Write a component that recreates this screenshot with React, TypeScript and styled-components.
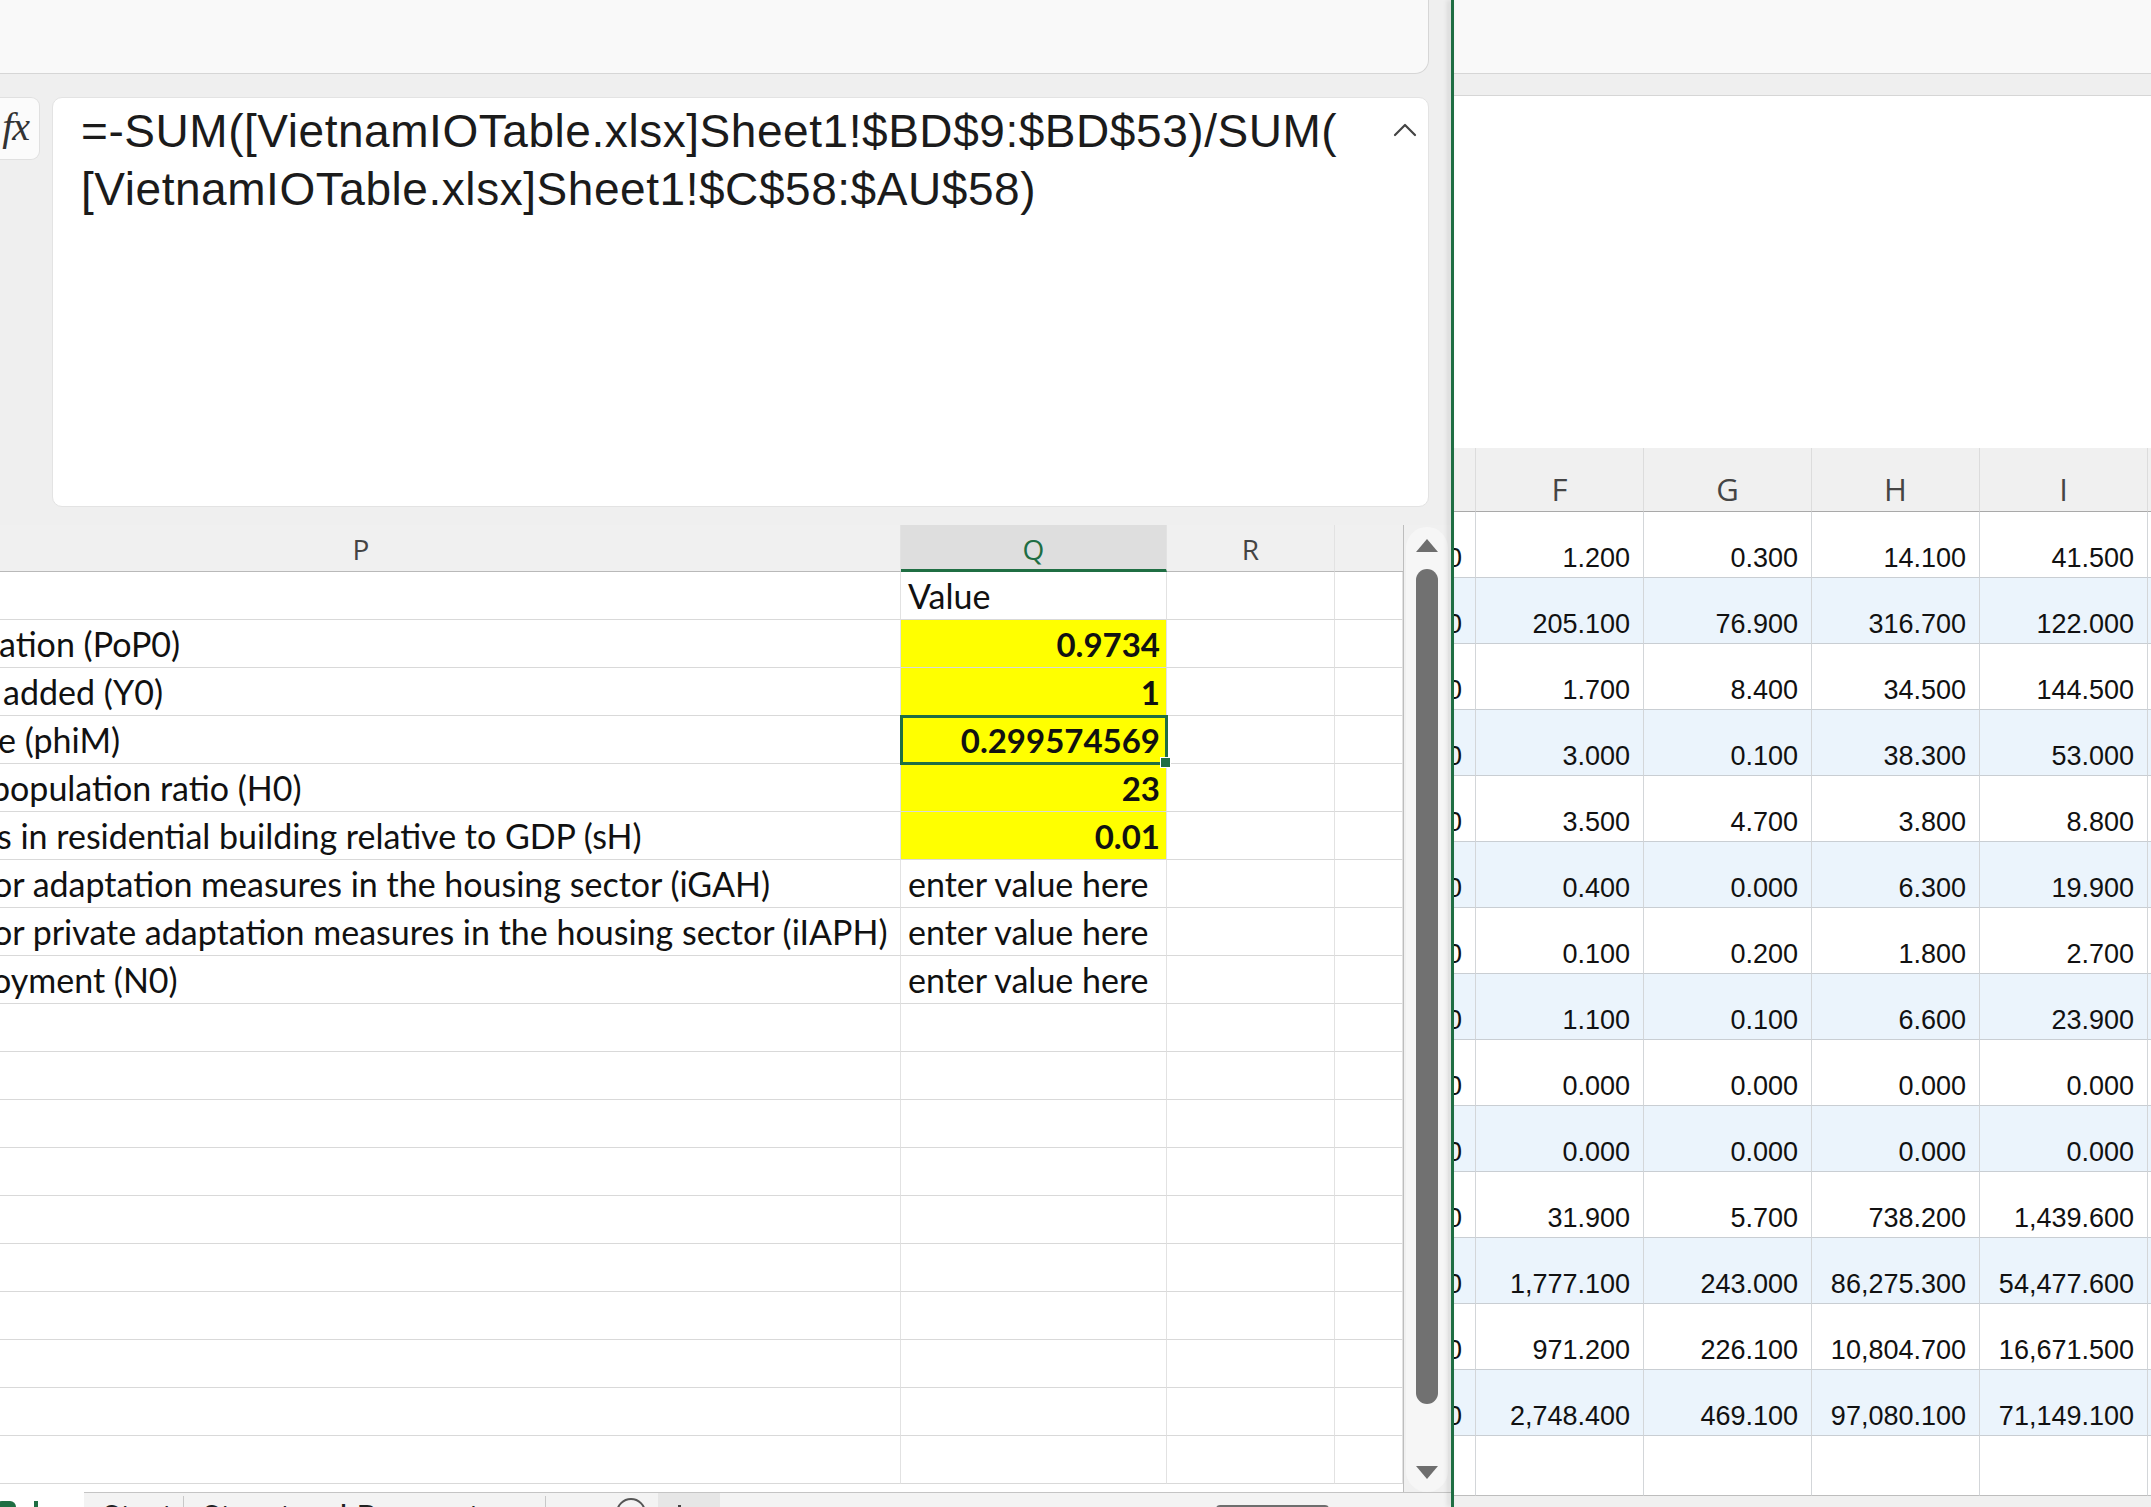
import styled, { createGlobalStyle, css } from "styled-components";

const GlobalStyle = createGlobalStyle`
  html, body {
    margin: 0;
    padding: 0;
    background: #efefef;
  }
  body {
    font-family: "Liberation Sans", Arial, sans-serif;
  }
  * {
    box-sizing: border-box;
  }
`;

const CELL_FONT = `Lato, "Open Sans", sans-serif`;
const HEAD_FONT = `"Open Sans", "Noto Sans", sans-serif`;

const Screen = styled.div`
  width: 2151px;
  height: 1507px;
  overflow: hidden;
  display: flex;
  background: #efefef;
`;

const LeftWindow = styled.div`
  width: 1451px;
  flex: none;
  display: flex;
  flex-direction: column;
  overflow: hidden;
`;

const Divider = styled.div`
  width: 3px;
  flex: none;
  background: #1f6e43;
  box-shadow: -3px 0 5px rgba(0, 0, 0, 0.15);
  z-index: 1;
`;

const RightWindow = styled.div`
  flex: 1;
  min-width: 0;
  display: flex;
  flex-direction: column;
  overflow: hidden;
`;

const RibbonStub = styled.div<{ $rounded?: boolean }>`
  height: 74px;
  flex: none;
  background: #f9f9f9;
  border-bottom: 1px solid #d6d6d6;
  ${(p) =>
    p.$rounded &&
    css`
      margin-right: 22px;
      border-right: 1px solid #d6d6d6;
      border-bottom-right-radius: 14px;
    `}
`;

/* formula bar */

const FormulaRow = styled.div`
  display: flex;
  gap: 12px;
  margin: 23px 22px 0 0;
  height: 410px;
  flex: none;
`;

const FxBox = styled.div`
  width: 40px;
  height: 63px;
  flex: none;
  background: #fbfbfb;
  border: 1px solid #e0e0e0;
  border-left: none;
  border-radius: 0 9px 9px 0;
  display: flex;
  align-items: center;
  justify-content: flex-end;
  padding: 0 10px 4px 0;
  font: italic 40px "Liberation Serif", serif;
  color: #333;
  letter-spacing: -1px;
`;

const FormulaBox = styled.div`
  flex: 1;
  display: flex;
  background: #fff;
  border: 1px solid #e3e3e3;
  border-radius: 10px;
  padding: 4px 10px 0 28px;
`;

const FormulaText = styled.div`
  flex: 1;
  font: 46px/58px "Liberation Sans", Arial, sans-serif;
  color: #1b1b1b;
  letter-spacing: 0.55px;
  white-space: nowrap;
`;

const CollapseButton = styled.div`
  width: 26px;
  height: 20px;
  margin-top: 18px;
  flex: none;
  color: #444;
`;

/* left sheet */

const SheetArea = styled.div`
  display: flex;
  margin-top: 18px;
  height: 967px;
  flex: none;
`;

const Grid = styled.div`
  width: 1404px;
  flex: none;
  background: #fff;
  border-right: 1px solid #bdbdbd;
  display: grid;
  grid-template-columns: 901px 266px 168px 1fr;
  grid-auto-rows: 48px;
  grid-template-rows: 47px;
  overflow: hidden;
`;

const HeadCell = styled.div<{ $active?: boolean; $last?: boolean; $offset?: number }>`
  background: ${(p) => (p.$active ? "#dedede" : "#f0f0f0")};
  border-bottom: ${(p) => (p.$active ? "3px solid #1f6e43" : "1px solid #b9b9b9")};
  border-right: ${(p) => (p.$last ? "none" : "1px solid #e2e2e2")};
  color: ${(p) => (p.$active ? "#1f6e43" : "#444")};
  font: 28px ${HEAD_FONT};
  display: flex;
  align-items: flex-end;
  justify-content: center;
  padding-bottom: ${(p) => (p.$active ? "2px" : "4px")};
  padding-right: ${(p) => p.$offset ?? 0}px;
  line-height: 36px;
`;

const Cell = styled.div<{ $yellow?: boolean; $align?: "left" | "right"; $bold?: boolean }>`
  position: relative;
  background: ${(p) => (p.$yellow ? "#ffff00" : "#fff")};
  border-bottom: 1px solid #d9d9d9;
  border-right: 1px solid #e2e2e2;
  font: ${(p) => (p.$bold ? "700 33px" : "400 34px")} / 40px ${CELL_FONT};
  color: #111;
  display: flex;
  align-items: flex-end;
  justify-content: ${(p) => (p.$align === "right" ? "flex-end" : "flex-start")};
  padding: 0 ${(p) => (p.$align === "right" ? "6px" : "0")} 3px
    ${(p) => (p.$align === "right" ? "0" : "7px")};
  white-space: nowrap;
  overflow: hidden;
`;

const LabelCell = styled(Cell)`
  padding-left: 0;
`;

const LabelText = styled.span<{ $shift: number }>`
  margin-left: ${(p) => p.$shift}px;
`;

const SelectedCell = styled(Cell)`
  overflow: visible;
  outline: 3px solid #1f6e43;
  outline-offset: -2px;
  z-index: 1;

  &::after {
    content: "";
    position: absolute;
    right: -5px;
    bottom: -5px;
    width: 9px;
    height: 9px;
    background: #1f6e43;
    border: 1px solid #fff;
  }
`;

const VScroll = styled.div`
  flex: 1;
  background: #f0f0f0;
  padding: 2px 3px 0 2px;
  display: flex;
`;

const Track = styled.div`
  flex: 1;
  background: #f6f6f6;
  border-radius: 22px;
  display: flex;
  flex-direction: column;
  align-items: center;
  padding-top: 12px;
`;

const Arrow = styled.div<{ $down?: boolean }>`
  width: 0;
  height: 0;
  border-left: 11px solid transparent;
  border-right: 11px solid transparent;
  ${(p) =>
    p.$down
      ? css`
          border-top: 13px solid #6e6e6e;
        `
      : css`
          border-bottom: 13px solid #6e6e6e;
        `}
`;

const Thumb = styled.div`
  width: 22px;
  height: 835px;
  margin: 17px 0 62px;
  background: #717171;
  border-radius: 11px;
`;

/* sheet tabs */

const TabBar = styled.div`
  height: 40px;
  flex: none;
  display: flex;
  background: #fff;
`;

const StatusIcon = styled.div`
  width: 84px;
  flex: none;
  padding: 9px 0 0 0;
  display: flex;
  gap: 6px;
`;

const StatusDot = styled.div`
  width: 20px;
  height: 20px;
  margin-left: -4px;
  border-radius: 6px;
  background: #1f6e43;
`;

const StatusMark = styled.div`
  width: 4px;
  height: 20px;
  margin-left: 12px;
  background: #1f6e43;
`;

const Tabs = styled.div`
  flex: 1;
  display: flex;
  align-items: flex-start;
  background: #f3f3f3;
  border-top: 1px solid #c4c4c4;
`;

const Tab = styled.div<{ $width: number }>`
  width: ${(p) => p.$width}px;
  flex: none;
  padding: 1px 0 0 18px;
  margin-top: 3px;
  border-right: 1px solid #c8c8c8;
  font: 34px/40px ${CELL_FONT};
  color: #222;
  white-space: nowrap;
`;

const AddSheet = styled.div`
  width: 30px;
  height: 30px;
  margin: 5px 12px 0 70px;
  border: 2px solid #555;
  border-radius: 50%;
  flex: none;
`;

const NavShade = styled.div`
  width: 62px;
  height: 30px;
  background: #e6e6e6;
  flex: none;
  display: flex;
  gap: 48px;
  padding: 12px 0 0 20px;
`;

const Tick = styled.div`
  width: 3px;
  height: 10px;
  background: #444;
`;

const HScrollThumb = styled.div`
  width: 113px;
  height: 20px;
  margin: 12px 0 0 496px;
  background: #6e6e6e;
  border-radius: 4px;
  flex: none;
`;

/* right window */

const WindowGap = styled.div`
  height: 21px;
  flex: none;
`;

const FormulaPane = styled.div`
  height: 353px;
  flex: none;
  background: #fff;
  border-top: 1px solid #d6d6d6;
`;

const DataGrid = styled.div`
  margin-left: -80px;
  display: grid;
  grid-template-columns: 102px 168px 168px 168px 168px 60px;
  grid-template-rows: 64px;
  grid-auto-rows: 66px;
  background: #fff;
`;

const DataHead = styled.div`
  background: #f0f0f0;
  border-bottom: 1px solid #a9a9a9;
  border-right: 1px solid #dcdcdc;
  font: 31px ${HEAD_FONT};
  color: #454545;
  display: flex;
  align-items: flex-end;
  justify-content: center;
  line-height: 40px;
  padding-bottom: 2px;
`;

const DataCell = styled.div<{ $band?: boolean }>`
  background: ${(p) => (p.$band ? "#ebf4fc" : "#fff")};
  border-bottom: 1px solid #c9ced3;
  border-right: 1px solid #d3d6d9;
  font: 27px/30px "Liberation Sans", Arial, sans-serif;
  color: #111;
  display: flex;
  align-items: flex-end;
  justify-content: flex-end;
  padding: 0 13px 4px 0;
  white-space: nowrap;
`;

const TailCells = styled.div`
  margin-left: -80px;
  display: grid;
  grid-template-columns: 102px 168px 168px 168px 168px 60px;
  background: #fff;
`;

const TailCell = styled.div`
  height: 60px;
  border-right: 1px solid #d3d6d9;
  border-bottom: 1px solid #bdbdbd;
`;

const BottomStrip = styled.div`
  flex: 1;
  background: #f0f0f0;
`;

type SheetRow = {
  label?: string;
  shift?: number;
  value?: string;
  bold?: boolean;
  yellow?: boolean;
  selected?: boolean;
};

const sheetRows: SheetRow[] = [
  { value: "Value" },
  { label: "ation (PoP0)", shift: -1, value: "0.9734", bold: true, yellow: true },
  { label: "added (Y0)", shift: 3, value: "1", bold: true, yellow: true },
  { label: "e (phiM)", shift: -2, value: "0.299574569", bold: true, yellow: true, selected: true },
  { label: "population ratio (H0)", shift: -9, value: "23", bold: true, yellow: true },
  { label: "s in residential building relative to GDP (sH)", shift: -3, value: "0.01", bold: true, yellow: true },
  { label: "or adaptation measures in the housing sector (iGAH)", shift: -7, value: "enter value here" },
  { label: "or private adaptation measures in the housing sector (iIAPH)", shift: -7, value: "enter value here" },
  { label: "oyment (N0)", shift: -8, value: "enter value here" },
  ...Array.from({ length: 10 }, () => ({})),
];

const tableRows: string[][] = [
  ["1.200", "0.300", "14.100", "41.500"],
  ["205.100", "76.900", "316.700", "122.000"],
  ["1.700", "8.400", "34.500", "144.500"],
  ["3.000", "0.100", "38.300", "53.000"],
  ["3.500", "4.700", "3.800", "8.800"],
  ["0.400", "0.000", "6.300", "19.900"],
  ["0.100", "0.200", "1.800", "2.700"],
  ["1.100", "0.100", "6.600", "23.900"],
  ["0.000", "0.000", "0.000", "0.000"],
  ["0.000", "0.000", "0.000", "0.000"],
  ["31.900", "5.700", "738.200", "1,439.600"],
  ["1,777.100", "243.000", "86,275.300", "54,477.600"],
  ["971.200", "226.100", "10,804.700", "16,671.500"],
  ["2,748.400", "469.100", "97,080.100", "71,149.100"],
];

const ChevronUp = () => (
  <svg width="26" height="20" viewBox="0 0 26 20" fill="none">
    <path d="M3 15 L13 5 L23 15" stroke="currentColor" strokeWidth="2.2" strokeLinecap="round" strokeLinejoin="round" />
  </svg>
);

const ValueCell = ({ row }: { row: SheetRow }) => {
  const align = row.bold ? "right" : "left";
  if (row.selected) {
    return (
      <SelectedCell $yellow={row.yellow} $align={align} $bold={row.bold}>
        {row.value}
      </SelectedCell>
    );
  }
  return (
    <Cell $yellow={row.yellow} $align={align} $bold={row.bold}>
      {row.value}
    </Cell>
  );
};

const LeftSheet = () => (
  <SheetArea>
    <Grid>
      <HeadCell $offset={178}>P</HeadCell>
      <HeadCell $active>Q</HeadCell>
      <HeadCell>R</HeadCell>
      <HeadCell $last />
      {sheetRows.map((row, i) => (
        <div key={i} style={{ display: "contents" }}>
          <LabelCell>
            {row.label && <LabelText $shift={row.shift ?? 0}>{row.label}</LabelText>}
          </LabelCell>
          <ValueCell row={row} />
          <Cell />
          <Cell />
        </div>
      ))}
    </Grid>
    <VScroll>
      <Track>
        <Arrow />
        <Thumb />
        <Arrow $down />
      </Track>
    </VScroll>
  </SheetArea>
);

const RightSheet = () => (
  <DataGrid>
    <DataHead />
    <DataHead>F</DataHead>
    <DataHead>G</DataHead>
    <DataHead>H</DataHead>
    <DataHead>I</DataHead>
    <DataHead />
    {tableRows.map((cells, i) => (
      <div key={i} style={{ display: "contents" }}>
        <DataCell $band={i % 2 === 1}>0.000</DataCell>
        {cells.map((c, j) => (
          <DataCell key={j} $band={i % 2 === 1}>
            {c}
          </DataCell>
        ))}
        <DataCell $band={i % 2 === 1} />
      </div>
    ))}
  </DataGrid>
);

export default function App() {
  return (
    <>
      <GlobalStyle />
      <Screen>
        <LeftWindow>
          <RibbonStub $rounded />
          <FormulaRow>
            <FxBox>fx</FxBox>
            <FormulaBox>
              <FormulaText>
                =-SUM([VietnamIOTable.xlsx]Sheet1!$BD$9:$BD$53)/SUM(
                <br />
                [VietnamIOTable.xlsx]Sheet1!$C$58:$AU$58)
              </FormulaText>
              <CollapseButton>
                <ChevronUp />
              </CollapseButton>
            </FormulaBox>
          </FormulaRow>
          <LeftSheet />
          <TabBar>
            <StatusIcon>
              <StatusDot />
              <StatusMark />
            </StatusIcon>
            <Tabs>
              <Tab $width={100}>Start</Tab>
              <Tab $width={362}>Structural Parameters</Tab>
              <AddSheet />
              <NavShade>
                <Tick />
              </NavShade>
              <HScrollThumb />
            </Tabs>
          </TabBar>
        </LeftWindow>
        <Divider />
        <RightWindow>
          <RibbonStub />
          <WindowGap />
          <FormulaPane />
          <RightSheet />
          <TailCells>
            {Array.from({ length: 6 }, (_, i) => (
              <TailCell key={i} />
            ))}
          </TailCells>
          <BottomStrip />
        </RightWindow>
      </Screen>
    </>
  );
}
